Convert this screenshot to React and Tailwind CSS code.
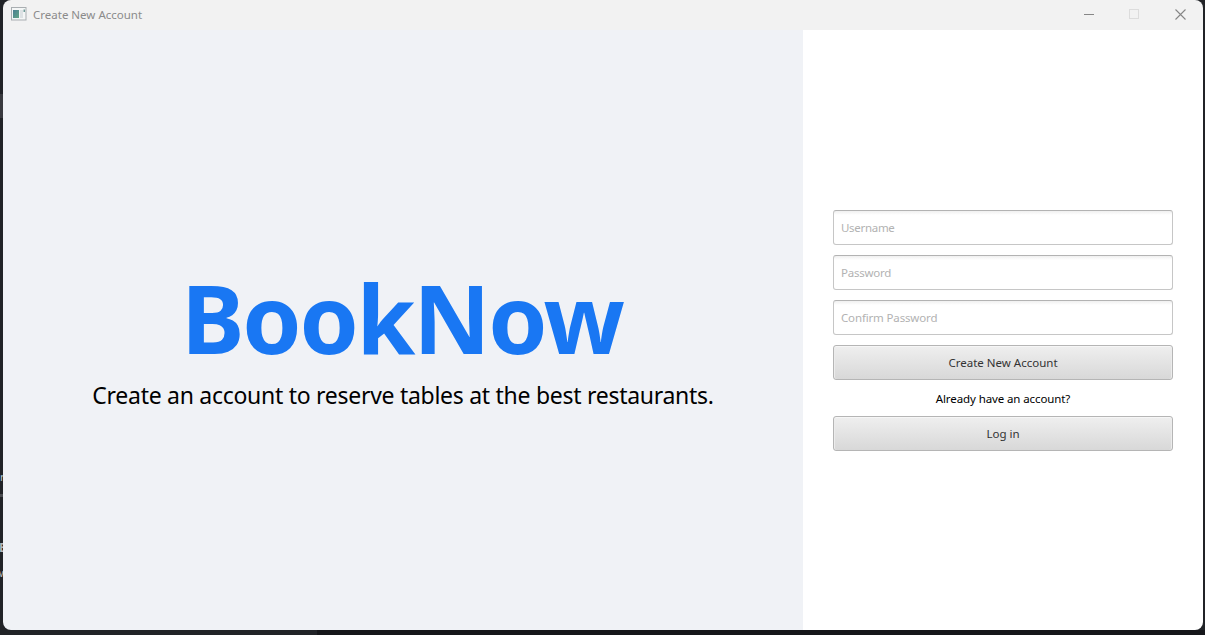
import React from "react";

function AppIcon() {
  return (
    <svg width="16" height="14" viewBox="0 0 16 14" className="block shrink-0">
      <rect x="0.5" y="0.5" width="14.5" height="12.5" fill="#f4f6f6" stroke="#a9aeb1" />
      <defs>
        <linearGradient id="pane" x1="0" y1="0" x2="1" y2="1">
          <stop offset="0" stopColor="#4b7f91" />
          <stop offset="1" stopColor="#63a587" />
        </linearGradient>
      </defs>
      <rect x="2" y="3" width="6" height="8" fill="url(#pane)" />
      <rect x="9" y="3" width="3" height="8" fill="#dde2e4" />
      <rect x="12.5" y="2.5" width="1.5" height="2.5" fill="#6d9a96" />
    </svg>
  );
}

function TitleBar() {
  return (
    <header className="flex h-[30px] shrink-0 items-start bg-[#f2f2f2]">
      <div className="flex h-[28px] items-center gap-[6px] pl-2">
        <AppIcon />
        <span className="whitespace-nowrap pt-[2px] text-[11.5px] leading-4 text-[#8b8b8b]">Create New Account</span>
      </div>
      <div className="ml-auto flex h-[28px] w-[137px] items-center">
        <div className="flex w-[46px] justify-center">
          <svg width="11" height="11" viewBox="0 0 11 11"><path d="M0 5.5H10" stroke="#868686" /></svg>
        </div>
        <div className="flex w-[45px] justify-center">
          <svg width="11" height="11" viewBox="0 0 11 11"><rect x="0.5" y="0.5" width="9" height="9" fill="none" stroke="#dcdcdc" /></svg>
        </div>
        <div className="flex w-[46px] justify-center">
          <svg width="11" height="11" viewBox="0 0 11 11"><path d="M0.5 0.5L10.5 10.5M10.5 0.5L0.5 10.5" stroke="#868686" strokeWidth="1.1" /></svg>
        </div>
      </div>
    </header>
  );
}

function Field({ placeholder, type, spacing }) {
  return (
    <input
      type={type}
      placeholder={placeholder}
      className={"block h-[35px] w-full rounded-[3px] border border-[#c6c6c6] border-t-[#b3b3b3] bg-linear-to-b from-[#f0f0f0] to-white to-[4px] px-[7px] text-[11.5px] text-[#333333] outline-none placeholder:text-[#b2b2b2] " + spacing}
    />
  );
}

function Button({ children }) {
  return (
    <button className="flex h-[35px] w-full items-center justify-center rounded-[3px] border border-[#b5b5b5] bg-linear-to-b from-[#efefef] to-[#d8d8d8] text-[11.5px] text-[#333333] shadow-[inset_0_1px_0_#f6f6f6,inset_1px_0_0_#ececec,inset_-1px_0_0_#ececec]">
      {children}
    </button>
  );
}

export default function App() {
  return (
    <div className="relative h-[635px] w-[1205px] overflow-hidden bg-[#212327] pr-[2px] pb-[5px] pl-[3px] font-['Noto_Sans',sans-serif]">
      <div className="absolute top-[94px] left-0 h-6 w-[3px] bg-[#393a3f]" />
      <div className="absolute top-[494px] left-0 h-[3px] w-[3px] bg-[#4a4c50]" />
      <span className="absolute top-[470px] left-0 text-[11px] leading-[14px] text-[#b3c8d4]">r</span>
      <span className="absolute top-[541px] left-[-1px] text-[12px] leading-[14px] font-bold text-[#b5b7ba]">E</span>
      <span className="absolute top-[566px] left-[-5px] text-[11px] leading-[14px] text-[#b5b7ba]">w</span>
      <div className="absolute right-0 bottom-0 h-[5px] w-[888px] bg-[#15161a]" />
      <div className="relative flex h-[630px] w-[1200px] flex-col overflow-hidden rounded-[8px]">
        <TitleBar />
        <main className="flex flex-1">
          <section className="flex w-[800px] flex-col items-center bg-[#f0f2f6] pt-[231px]">
            <h1 className="whitespace-nowrap pr-[2px] text-[95px] leading-[112px] font-bold tracking-[-2.2px] text-[#1977f3]">BookNow</h1>
            <p className="mt-[6px] whitespace-nowrap text-[23px] leading-8 tracking-[-0.28px] text-black">
              Create an account to reserve tables at the best restaurants.
            </p>
          </section>
          <section className="flex w-[400px] flex-col gap-[10px] bg-white px-[30px] pt-[180px]">
            <Field type="text" placeholder="Username" spacing="tracking-[-0.3px]" />
            <Field type="password" placeholder="Password" spacing="tracking-[-0.25px]" />
            <Field type="password" placeholder="Confirm Password" spacing="tracking-[-0.15px]" />
            <Button>Create New Account</Button>
            <p className="h-4 pt-px text-center text-[11.5px] leading-4 tracking-[-0.1px] text-black">Already have an account?</p>
            <Button>Log in</Button>
          </section>
        </main>
      </div>
    </div>
  );
}
